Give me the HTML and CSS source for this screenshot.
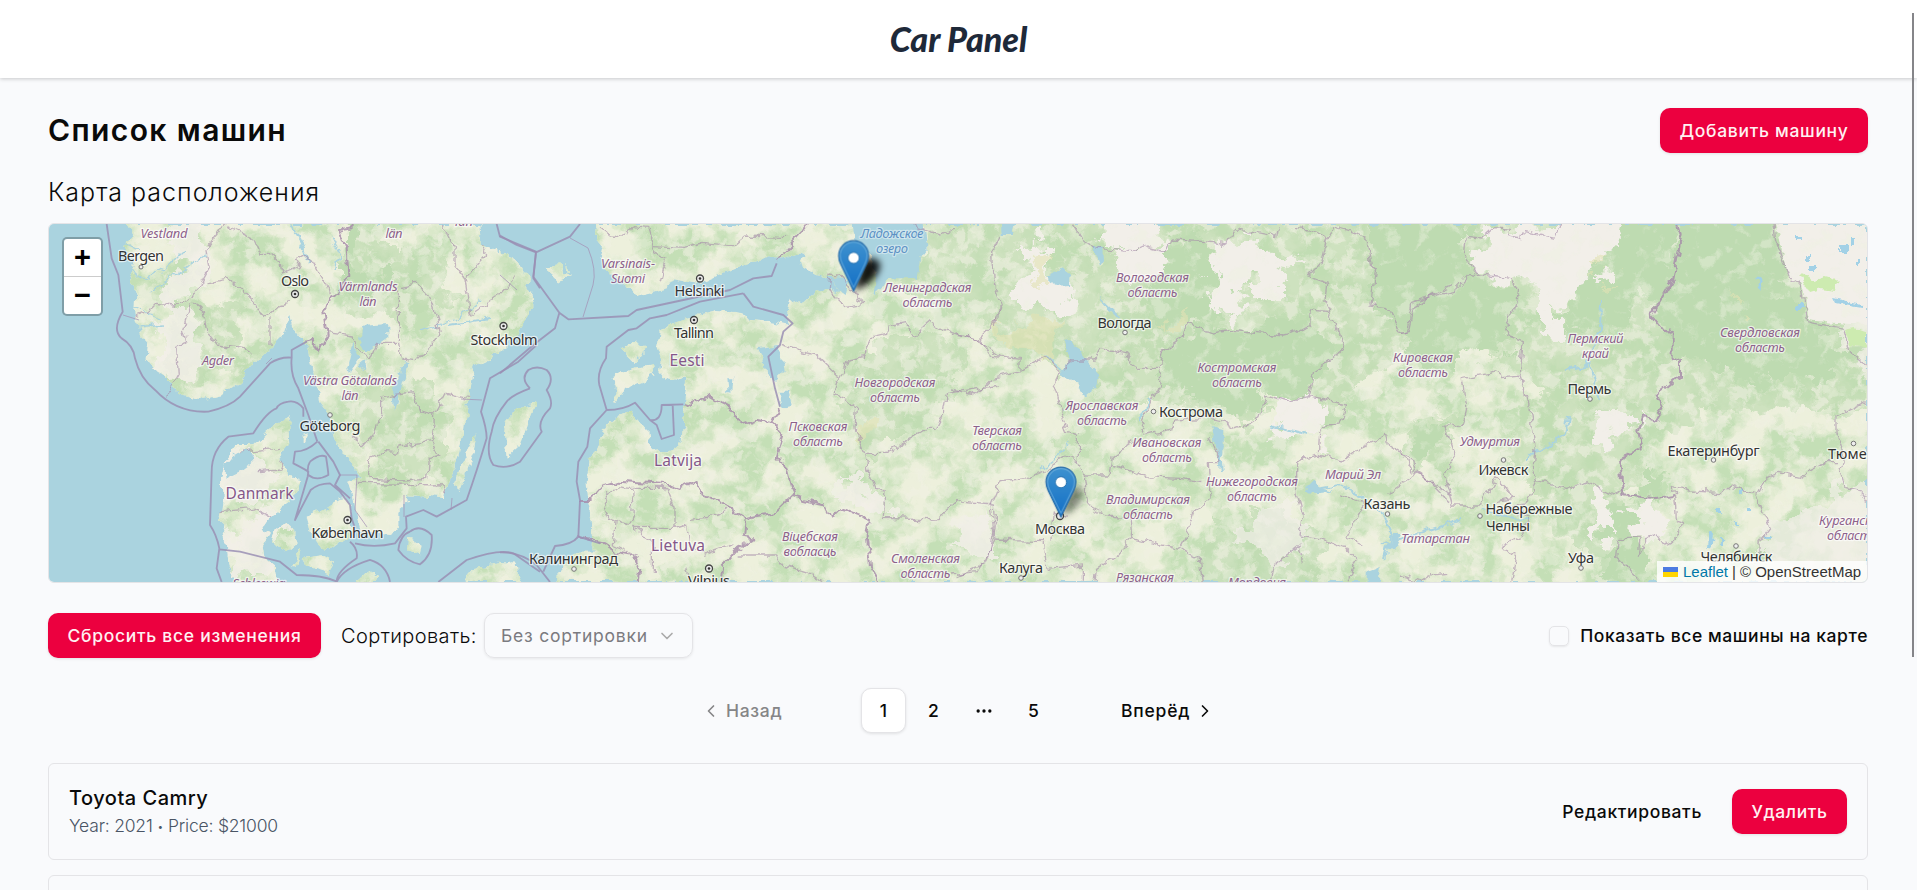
FILE: index.html
```html
<!DOCTYPE html>
<html lang="ru">
<head>
<meta charset="utf-8">
<title>Car Panel</title>
<link rel="stylesheet" href="styles.css">
</head>
<body>
<header class="header"><span class="logo">Car Panel</span></header>
<main class="main">
  <div class="title-row">
    <h1 class="title">Список машин</h1>
    <button class="btn btn-add">Добавить машину</button>
  </div>
  <h2 class="subtitle">Карта расположения</h2>
  <section class="map">
    <svg class="map-canvas" viewBox="49 224 1818 358" preserveAspectRatio="none">
      <defs>
        <filter id="rough" x="0" y="0" width="100%" height="100%" color-interpolation-filters="sRGB"><feTurbulence type="fractalNoise" baseFrequency=".09" numOctaves="3" seed="4"/><feDisplacementMap in="SourceGraphic" scale="10" xChannelSelector="R" yChannelSelector="G"/></filter>
        <filter id="ragged" filterUnits="userSpaceOnUse" x="49" y="224" width="1818" height="358" color-interpolation-filters="sRGB"><feTurbulence type="fractalNoise" baseFrequency=".035" numOctaves="5" seed="14"/><feDisplacementMap in="SourceGraphic" scale="55" xChannelSelector="R" yChannelSelector="G"/></filter>
        <filter id="forest" x="0" y="0" width="100%" height="100%" color-interpolation-filters="sRGB"><feTurbulence type="fractalNoise" baseFrequency=".03" numOctaves="5" seed="8"/><feColorMatrix values="0 0 0 0 .77  0 0 0 0 .875  0 0 0 0 .715  4 0 0 0 -1.5"/></filter>
        <filter id="clearing" x="0" y="0" width="100%" height="100%" color-interpolation-filters="sRGB"><feTurbulence type="fractalNoise" baseFrequency=".07" numOctaves="5" seed="21"/><feColorMatrix values="0 0 0 0 .945  0 0 0 0 .945  0 0 0 0 .89  0 6 0 0 -3"/></filter>
        <filter id="tracks" x="0" y="0" width="100%" height="100%" color-interpolation-filters="sRGB"><feTurbulence type="fractalNoise" baseFrequency=".06" numOctaves="5" seed="33"/><feColorMatrix values="0 0 0 0 .93  0 0 0 0 .945  0 0 0 0 .88  0 0 6 0 -3.3"/></filter>
        <filter id="soft" x="-50%" y="-50%" width="200%" height="200%"><feGaussianBlur stdDeviation="3.500"/></filter>
        <linearGradient id="pin-fill" x1="0" y1="0" x2="0" y2="1"><stop offset="0" stop-color="#3f92cf"/><stop offset="1" stop-color="#126fc6"/></linearGradient>
        <clipPath id="land">
          <path transform="translate(40 215) scale(.33333)" d="M245 0L280 60 255 95 285 140 265 180 290 230 285 290 300 360 325 385 320 430 345 465 400 505 420 535 490 552 545 540 600 500 640 450 685 400 735 350 750 300 765 345 800 390 810 440 830 500 840 560 870 600 885 670 920 730 960 790 925 800 940 850 950 900 960 945 1050 960 1075 930 1075 890 1110 860 1100 840 1215 850 1225 800 1250 740 1275 640 1285 550 1300 480 1290 460 1340 435 1380 410 1420 370 1470 300 1485 250 1430 160 1380 115 1325 90 1320 0Z
          M755 597L745 640 748 690 725 720 735 780 780 790 775 830 740 860 720 890 690 905 670 935 685 960 665 990 670 1030 705 1060 710 1130 590 1130 565 1040 560 980 543 930 550 860 543 790 560 730 590 690 640 690 680 650 720 620Z
          M700 940L740 925 765 950 770 985 740 1010 705 990 690 960ZM800 905L840 890 870 870 910 850 930 870 925 920 945 950 900 985 880 1000 835 990 815 960ZM785 1030L850 1020 885 1040 865 1075 800 1055ZM1108 972L1142 992 1136 1018 1104 1003ZM1310 655L1300 715 1255 832 1248 800 1285 700ZM1490 560L1430 580 1400 620 1395 655 1403 725 1440 690 1460 640ZM1240 1130L1300 1060 1410 1043 1430 1080 1460 1130ZM780 665L805 658 795 680ZM950 1095L985 1065 1015 1085 1000 1130ZM760 1060L775 1000 782 1000 770 1060Z"/>
          <path transform="translate(500 215) scale(.33333)" d="M290 0L285 70 310 100 300 140 330 180 370 210 420 240 500 220 520 190 600 205 680 170 780 130 850 130 895 115 920 120 900 150 950 180 990 190 1020 230 990 220 930 240 890 265 870 250 860 310 870 330 820 320 740 310 730 295 650 285 590 300 520 325 480 350 470 400 485 440 480 470 495 490 540 500 560 490 550 560 550 620 545 680 510 710 480 715 450 690 445 650 420 620 395 590 340 610 310 640 290 700 270 730 260 800 265 860 275 920 280 980 285 1010 230 1010 190 1050 150 1130H4200V0Z
          M335 490L400 460 460 450 465 480 400 510 370 530 350 560 345 520ZM360 400L410 375 435 400 430 420 400 440ZM140 155L175 148 188 170 215 180 180 190 170 205 155 180ZM195 150L210 165 200 172ZM0 110L40 130 90 190 60 250 0 320ZM0 1043L50 1050 60 1130H0Z"/>
        </clipPath>
      </defs>
      <rect x="49" y="224" width="1818" height="358" fill="#aad3df"/>
      <g filter="url(#rough)"><g clip-path="url(#land)">
        <rect x="49" y="224" width="1818" height="358" fill="#edf0dc"/>
        <rect x="49" y="224" width="1818" height="358" filter="url(#forest)"/>
        <g fill="#c0dcb3" opacity=".7" filter="url(#ragged)">
          <path d="M350 230L440 250 450 300 390 325 340 300ZM180 300L250 310 240 365 180 395 165 370ZM350 370L440 395 450 470 390 485 370 440ZM870 330L960 340 940 420 870 450 840 400ZM930 210H1890V400L1650 430 1420 330 1330 420 1100 400 1010 330 900 290ZM1240 425L1320 400 1310 360 1220 400ZM1620 300L1680 340 1640 480 1620 600 1500 450ZM1400 430L1460 410 1450 480 1400 440ZM1190 560L1250 500 1330 540 1320 600H1190Z"/>
        </g>
        <g fill="#f2efe9" opacity=".85" filter="url(#ragged)"><path d="M160 215L205 215 215 275 190 310 165 290 180 250ZM165 320L185 300 200 340 185 385 150 370ZM205 520L285 515 275 560 245 590 225 560ZM190 450L240 440 280 480 260 505 200 495ZM845 475L890 490 885 512 845 500ZM960 520L990 515 990 560 955 560Z"/></g>
        <rect x="49" y="224" width="1818" height="358" filter="url(#clearing)" opacity=".6"/>
        <g fill="#bedbb1" filter="url(#ragged)">
          <path d="M342 232L358 230 364 264 388 280 350 295 342 270ZM1160 345L1220 325 1320 320 1340 350 1310 400 1265 400 1230 425 1170 380ZM1370 210H1480L1460 245 1480 275 1515 285 1510 360 1420 365 1400 325 1370 300ZM1605 210L1670 210 1665 290 1600 335 1560 325 1580 285ZM1680 210L1775 210 1785 290 1820 325 1840 350 1830 380 1750 380 1675 360 1655 320ZM1415 430L1450 422 1440 452 1418 448ZM1640 465L1670 475 1665 500 1640 490ZM1620 500L1640 500 1638 560 1665 600H1625L1600 555ZM1165 240L1205 235 1215 320 1160 330 1150 290Z"/>
        </g>
        <g fill="#f2efe9" filter="url(#ragged)">
          <path d="M1015 238L1045 240 1050 275 1075 300 1060 315 1010 300 1030 270ZM1100 215H1150L1145 248 1105 242ZM1110 248L1165 245 1165 270 1125 280ZM1210 248L1235 238 1265 240 1295 265 1280 290 1240 290 1260 310 1210 318 1205 270ZM1270 400L1320 395 1315 445 1280 440ZM1485 228L1550 230 1560 255 1500 280 1480 268ZM1560 215H1615L1595 290 1560 305 1560 340 1535 330 1535 290 1515 270ZM1592 480L1620 500 1618 540 1588 540ZM1630 510L1660 505 1665 535 1635 540ZM1590 420L1635 420 1620 445 1595 440Z"/>
        </g>
        <g fill="#f2efe9" opacity=".7" filter="url(#ragged)"><path d="M1760 540L1840 480 1890 500V600H1760ZM1840 290L1850 350 1890 390V310ZM1250 510L1300 500 1295 560 1235 545Z"/></g>
        <path fill="#f2efe9" d="M1776 224H1867V325L1835 323 1808 320 1802 282 1788 275Z"/>
        <rect x="49" y="224" width="1818" height="358" filter="url(#tracks)" opacity=".45"/>
        <g fill="#e3e3b5" opacity=".6" filter="url(#ragged)"><path d="M990 320L1060 330 1040 355 1005 345ZM1035 250L1050 255 1042 290 1033 275ZM1160 325L1190 310 1188 322 1170 330ZM1597 285L1615 280 1612 292ZM1735 300L1752 305 1745 315ZM860 415L875 420 865 450 855 440ZM1597 252L1605 255 1602 268Z"/></g>
        <g fill="#cdebb0"><path d="M1800 275L1815 280 1825 277 1840 281 1835 290 1820 288 1810 291ZM1845 330L1855 328 1866 332V350L1850 345Z"/></g>
        <g fill="#aad3df">
          <path transform="translate(500 215) scale(.33333)" d="M1050 0L1060 60 1110 120 1130 180 1120 235 1150 215 1165 190 1250 190 1260 130 1285 95 1270 0ZM770 400L840 390 848 470 820 500 795 480 790 430ZM835 530L865 530 875 570 850 575ZM685 490L700 490 697 530 688 528ZM985 185L1050 190 1040 240 1000 225Z"/>
          <path transform="translate(950 215) scale(.33333)" d="M150 0L155 60 190 60 200 25ZM298 180L330 163 362 180 360 210 320 212 298 200ZM435 90L460 100 462 140 450 150ZM450 248L515 310 500 310 460 270ZM340 375L375 390 410 440 448 480 435 515 400 545 385 510 335 485 330 460 365 440ZM790 630L820 640 815 760 800 710ZM1250 1075L1290 1060 1285 1110H1250ZM1330 960L1355 960 1340 1000 1310 1010ZM1060 830L1090 800 1110 820 1150 830 1100 835Z"/>
          <path transform="translate(40 215) scale(.33333)" d="M970 335L1045 330 1045 365 1010 390 980 410 960 370ZM935 380L960 430 930 470 915 460ZM955 455L980 435 975 465ZM1105 445L1065 585 1058 550 1090 440ZM580 720L630 705 640 740 600 770 560 790 555 750Z"/>
        </g>
        <g fill="none" stroke="#aad3df" stroke-width="2">
          <path d="M291 224L305 250 310 262M450 325L490 318M1270 425L1310 435M1310 490L1340 485 1360 495 1383 515 1392 535 1385 560M1383 545L1460 520M1480 510L1530 520M1601 300L1600 330 1585 365M1565 370L1590 365 1595 382 1600 400M1525 462L1535 450 1550 445 1565 435 1568 415M1218 440L1222 470M1045 355L1060 368M1150 400L1140 420"/>
          <path stroke-width="1.300" d="M120 262L145 280 170 265 185 250M150 292L175 275 205 255M130 305L160 318M125 330L160 325M120 240L140 250M420 330L455 320 480 300M330 235L340 255 335 270M1070 440L1060 455 1040 470"/>
        </g>
        <g fill="#a2d1e6"><path d="M1842 245h5v8h-5zM1850 240h4v5h-4zM1838 248h3v6h-3zM1858 262h3v4h-3zM1806 254h5v6h-5zM1810 266h4v6h-4zM1797 238h4v3h-4zM1832 298l30 6v3l-28-5zM1708 530l5 2-1 14-5 4zM1716 510h5v4h-5zM1740 490h3v5h-3zM1748 508h4v4h-4zM1720 540h4v5h-4zM1735 520h3v4h-3zM1755 278l5 1 3 12-4-4zM1797 304h4v5h-4zM1765 535h4v3h-4z"/></g>
      </g>
      <g class="border thin">
        <path transform="translate(40 215) scale(.33333)" d="M555 27L495 110 505 160 455 250 410 270 350 265 325 290 290 305M565 35L640 70 660 115 690 115 720 140 725 180 780 155 765 130 800 120 855 200 865 235M500 200L560 190 600 220 640 260 670 310 715 270 745 260M455 270L430 340 440 380 410 400 415 480 380 545M460 270L490 290 500 350 530 390 610 400 640 420M690 310L690 390M1210 27L1245 100 1245 150 1275 190 1340 120 1325 90M1080 215L1130 205 1165 240 1190 315 1200 360 1130 440 1085 435 1075 380 1075 220M1275 190L1290 300 1380 240 1430 185M860 350L940 360 950 400 990 430 1010 385 1070 385M1025 545L1025 600 1005 650 970 690 930 665M1025 545L1120 530 1140 590 1185 600 1175 680 1075 690 1070 715 1040 710 985 735 990 790 1080 795 1160 790 1165 730 1200 720 1180 680M1180 600L1215 535 1285 550M950 805L1210 810 1220 835M545 890L640 880 690 905M650 770L720 765 730 740M610 710L720 700"/>
        <path transform="translate(500 215) scale(.33333)" d="M300 35L330 60 385 65 400 35 440 40 460 110 500 130 480 200M460 95L550 100 600 85 700 95 740 60 860 65M990 180L1030 185 1070 250 1090 265 1040 275 985 220ZM845 390L900 410 950 420 980 450 1020 485 1005 535 1070 570 1065 640 1095 715 1100 760 1125 820 1155 825 1150 910M1020 485L1040 435 1090 425 1120 365 1160 355 1165 330 1215 320 1240 365 1290 320 1350 350 1430 375 1500 420M1095 715L1160 715 1200 690 1280 640 1305 640 1330 590 1340 535 1500 510M1430 375L1500 310 1500 270M1150 910L1310 915 1370 860 1480 870 1485 940 1470 1010 1430 1070 1350 1080M310 860L345 815 395 820 400 900 390 930 330 910ZM400 820L500 820 525 880 525 940 400 940M345 920L340 990 410 1020M400 940L460 980 460 1070M525 940L560 930 570 990 610 1020 700 990M570 910L660 900 690 880M1230 27L1320 60 1360 35M560 1060L570 1101M710 1020L830 1020 850 1050 920 1070 970 1101"/>
        <path transform="translate(950 215) scale(.33333)" d="M150 60L125 110 130 210 155 275 135 335M370 27L400 80 450 100 540 110 580 90 650 110 665 75 770 80 830 90 860 40 980 65 985 40M1030 40L1080 45 1130 70 1150 35 1215 55 1250 70 1265 160 1280 165 1260 270 1310 275 1350 355 1375 350 1390 280 1450 240 1500 215M1130 70L1110 150 1075 185 1130 205 1125 260 1140 290 1080 285 1080 330 1045 350 1000 360 840 345 790 355 760 350 710 320 700 365 635 410 625 460 560 460 530 420 450 400 430 435 370 435 340 460M0 355L90 375 120 420 210 430 210 470 130 490 80 540 0 525M210 470L290 425 330 470 310 510 330 570 350 650 385 660 385 740 340 725 280 770 220 795 150 800 120 870 135 975 100 1050 20 1085M625 460L630 500 590 590 570 640 580 660 670 640 670 615 780 610 830 620 870 645 930 605 950 540 1010 560 1075 545 1090 470 1150 430 1185 400 1140 290M1075 545L1190 570 1170 630 1110 635 1105 720 1040 735 1040 830M1105 720L1170 740 1220 700 1310 660 1315 690 1390 740 1400 770 1500 840M385 740L400 780 480 780 490 720 550 680M490 745L590 785 690 790 760 800M780 660L810 740 775 740 780 850 730 890 710 960 690 1000 750 1030 760 1100M400 780L410 870 470 900 540 905 545 970 630 990 690 1000M545 970L500 1020 440 1060 435 1100M135 975L280 980 295 1060 400 1050 400 1100M300 980L310 890 350 910M1040 830L1060 900 1050 960 1110 970 1190 1000 1220 1030 1190 1100M1170 840L1250 870 1220 900 1190 970 1240 990M1310 840L1400 780M960 1100L970 1050 1050 990 1060 1040"/>
        <path transform="translate(1400 215) scale(.33333)" d="M0 355L20 350 35 265 110 240 160 230 210 175 240 180 330 190 350 220 345 270 315 330 330 365 370 380 360 480 310 485 290 470 190 490 200 580 190 625 135 640 165 730 135 780 160 870 240 870 290 790 320 820 340 850 290 860M240 180L190 120 195 70 240 75 285 35 325 40 325 65 365 75 370 50 465 70 485 27M360 480L390 580 405 700 400 760 415 790 380 870 310 880M415 800L500 820 560 800 640 840 665 830 M1125 27L1130 80 1165 180 1200 200 1220 320 1330 340 1350 410 1400 450M1400 560L1305 605 1305 660 1320 690 1330 740 1320 780 1335 815 1375 825 1400 860M1320 740L1280 740 1200 790 1130 775 1095 790 1070 840 990 815 970 830 870 825 820 815 825 850 830 920 860 930 810 980 790 990 770 960 740 980 715 1025M310 880L390 900 370 955 310 990 345 1030 335 1100M715 1025L720 970 655 970 650 1030 720 1095M1070 840L1110 940 1080 980 1080 1030M0 705L40 770 80 790 150 860M0 1080L60 1100 90 1080 150 1075"/>
      </g>
      <g class="border thick">
        <path transform="translate(40 215) scale(.33333)" d="M935 27L935 40 900 45 920 100 925 180 900 235 865 245 850 290 860 360 835 410 820 375 800 380"/>
        <path transform="translate(500 215) scale(.33333)" d="M550 570L625 545 690 580 700 605 740 630 775 615 820 625 850 660 830 730 860 760 880 840 830 890 740 910 690 880 600 830 595 800 540 825 500 810 350 800 310 815 275 855 240 855M740 910L735 965 760 970 710 1005 670 1050 665 1101M820 625L840 580M880 845L970 865 990 905 1030 885 1110 915 1100 960 1110 1060 1135 1101M230 970L310 985 350 1010 400 1020 415 1060 410 1101M925 27L830 140"/>
        <path transform="translate(1400 215) scale(.33333)" d="M835 27L845 60 820 190 755 300 790 345 815 355 815 430 840 440 840 480 770 540 790 580 765 620 730 605 715 650 725 700 660 730 670 840 760 850 820 840"/>
      </g></g>
      <g class="border sea">
        <path transform="translate(40 215) scale(.33333)" d="M200 27L215 130 235 180 248 290Q215 345 245 370 280 390 285 430 300 490 345 525 410 595 505 590 570 575 600 545L690 445Q720 425 755 428L755 405 800 380M755 428Q750 480 775 520L805 600 832 680 M832 680Q800 710 765 710L760 745Q790 760 805 770L803 785 765 915 812 825Q835 805 870 805L900 830 930 870 935 910 945 940M835 680L880 740 900 780 885 810 930 850M790 605L790 580Q770 555 745 560 715 565 710 580 680 590 640 655L565 665Q515 705 515 770L510 930Q530 960 538 1000L530 1060 545 1101M538 1003L600 1010 720 1040 770 1080Q850 1080 890 1100 890 1070 950 1030 955 1000 930 980M810 740Q840 715 858 725 865 770 865 780 830 800 805 780 800 755 810 740M945 985Q1000 1000 1065 985L1100 940 1098 905 1150 885 1190 905 1280 855Q1310 770 1340 670 1340 640 1323 590L1350 490 1435 440 1490 390M1370 27L1380 65 1488 110 1480 190 1500 220M1110 950Q1140 925 1175 960 1180 1020 1140 1048 1100 1040 1075 1005 1080 960 1110 950M890 1101Q910 1060 990 1035 1040 1050 1050 1101M1195 1101L1280 1035Q1380 1000 1420 1015L1500 1070"/>
        <path transform="translate(500 215) scale(.33333)" d="M0 62L50 90 108 112 100 185 178 293 205 313 385 303 410 285 690 225 760 190 815 183 830 145M108 112L210 65 240 27M178 293L165 340 100 390 0 475M730 235L760 275 850 300 878 325 850 350 840 390 805 425 825 520 840 575M730 235L600 260 500 300 450 310 410 340 385 345 320 395 318 430Q290 470 298 510L320 585 270 640 262 695 235 740 230 800 240 855 235 965Q215 990 165 993L130 1070M320 585Q370 585 405 563L450 615Q485 620 485 570L518 570 522 660 485 672 470 630 450 615M485 570L550 568M90 520Q60 490 85 465 110 450 140 465 165 490 140 525 160 560 150 580 110 620 125 650L60 740Q20 765 -20 750 -45 715 -25 650 -20 610 20 560 35 540 90 520M0 1012Q60 1010 110 1050L150 1101M235 965L300 985"/>
      </g>
      <g fill="none" stroke="#a48fb3" opacity=".7"><path d="M570 238L588 248Q597 270 593 285L583 317M123 315L139 320M266 364L272 358M339 475L357 475 355 510 367 527M451 510L452 498M404 517L404 495M461 399L482 400M500 275L517 290"/></g>

      <g class="place city">
        <text x="141" y="261" textLength="46">Bergen</text><text x="295" y="286" textLength="28">Oslo</text><text x="504" y="345" textLength="67">Stockholm</text><text x="330" y="431" textLength="61">Göteborg</text><text x="347.500" y="538" textLength="72">København</text>
        <text x="699.500" y="296" textLength="50">Helsinki</text><text x="694" y="338" textLength="40">Tallinn</text><text x="573.500" y="564" textLength="89">Калининград</text><text x="709" y="586" textLength="42">Vilnius</text>
        <text x="1124.500" y="328" textLength="54">Вологда</text><text x="1191" y="417" textLength="64">Кострома</text><text x="1060" y="534" textLength="50">Москва</text><text x="1021" y="573" textLength="44">Калуга</text><text x="1387" y="509" textLength="47">Казань</text>
        <text x="1589.500" y="394" textLength="44">Пермь</text><text x="1503.500" y="475" textLength="50">Ижевск</text><text x="1529" y="514" textLength="87">Набережные</text><text x="1508" y="531" textLength="44">Челны</text><text x="1581" y="563" textLength="26">Уфа</text><text x="1713.500" y="456" textLength="92">Екатеринбург</text><text x="1856" y="459" textLength="56">Тюмень</text><text x="1736.500" y="562" textLength="72">Челябинск</text>
      </g>
      <g class="place region">
        <text x="164" y="238" textLength="47">Vestland</text><text x="394" y="238" textLength="17">län</text><text x="464" y="226" textLength="18">län</text><text x="368" y="291" textLength="59">Värmlands</text><text x="368" y="306" textLength="17">län</text><text x="218" y="365" textLength="32">Agder</text><text x="350" y="385" textLength="94">Västra Götalands</text><text x="350" y="400" textLength="17">län</text><text x="259" y="588" textLength="53">Schleswig</text>
        <text x="628" y="268" textLength="54">Varsinais-</text><text x="628" y="283" textLength="34">Suomi</text><text x="927.500" y="292" textLength="88">Ленинградская</text><text x="927.500" y="307" textLength="50">область</text><text x="895" y="387" textLength="81">Новгородская</text><text x="895" y="402" textLength="50">область</text><text x="818" y="431" textLength="59">Псковская</text><text x="818" y="446" textLength="50">область</text><text x="810" y="541" textLength="56">Віцебская</text><text x="810" y="556" textLength="53">вобласць</text><text x="925.500" y="563" textLength="69">Смоленская</text><text x="925.500" y="578" textLength="50">область</text>
        <text x="1152.500" y="282" textLength="73">Вологодская</text><text x="1152.500" y="297" textLength="50">область</text><text x="1237" y="372" textLength="79">Костромская</text><text x="1237" y="387" textLength="50">область</text><text x="1102" y="410" textLength="73">Ярославская</text><text x="1102" y="425" textLength="50">область</text><text x="997" y="435" textLength="50">Тверская</text><text x="997" y="450" textLength="50">область</text><text x="1167" y="447" textLength="69">Ивановская</text><text x="1167" y="462" textLength="50">область</text><text x="1252" y="486" textLength="92">Нижегородская</text><text x="1252" y="501" textLength="50">область</text><text x="1148" y="504" textLength="84">Владимирская</text><text x="1148" y="519" textLength="50">область</text><text x="1353" y="479" textLength="56">Марий Эл</text><text x="1145" y="582" textLength="58">Рязанская</text><text x="1257" y="587" textLength="58">Мордовия</text>
        <text x="1423" y="362" textLength="60">Кировская</text><text x="1423" y="377" textLength="50">область</text><text x="1595.500" y="343" textLength="56">Пермский</text><text x="1595.500" y="358" textLength="27">край</text><text x="1760" y="337" textLength="80">Свердловская</text><text x="1760" y="352" textLength="50">область</text><text x="1490" y="446" textLength="60">Удмуртия</text><text x="1435.500" y="543" textLength="69">Татарстан</text><text x="1852" y="525" textLength="66">Курганская</text><text x="1852" y="540" textLength="50">область</text>
      </g>
      <g class="place lake"><text x="892" y="238" textLength="63">Ладожское</text><text x="892" y="253" textLength="32">озеро</text></g>
      <g class="place country"><text x="259.500" y="498.500" textLength="68">Danmark</text><text x="687" y="365.500" textLength="35">Eesti</text><text x="678" y="466" textLength="48">Latvija</text><text x="678" y="551" textLength="54">Lietuva</text></g>
      <g fill="#eee" stroke="#444"><g stroke-width="1.300"><circle cx="295" cy="294" r="3.500"/><circle cx="503.500" cy="326" r="3.500"/><circle cx="347.500" cy="520" r="3.500"/><circle cx="700" cy="278.500" r="3.500"/><circle cx="694" cy="320" r="3.500"/><circle cx="709" cy="568.500" r="3.500"/><circle cx="1060" cy="516" r="3.500"/></g>
      <g stroke="#777"><circle cx="141" cy="267" r="2"/><circle cx="330" cy="415" r="2.300"/><circle cx="574" cy="569" r="2.300"/><circle cx="1125" cy="332.500" r="2.300"/><circle cx="1153.500" cy="411.500" r="2.300"/><circle cx="1387.500" cy="514" r="2.300"/><circle cx="1021" cy="578" r="2.300"/><circle cx="1590" cy="399" r="2.300"/><circle cx="1503.500" cy="460" r="2.300"/><circle cx="1480" cy="516" r="2.300"/><circle cx="1581" cy="568" r="2.300"/><circle cx="1713.500" cy="460" r="2.300"/><circle cx="1853.500" cy="443.500" r="2.300"/><circle cx="1736" cy="546" r="2.300"/></g></g>
      <g fill="#333"><circle cx="295" cy="294" r="1.300"/><circle cx="503.500" cy="326" r="1.300"/><circle cx="347.500" cy="520" r="1.300"/><circle cx="700" cy="278.500" r="1.300"/><circle cx="694" cy="320" r="1.300"/><circle cx="709" cy="568.500" r="1.300"/></g>

      <g filter="url(#soft)"><path d="M854 291L862 262Q872 254 880 263 881 274 868 284Z" fill="#000" opacity=".9"/><path d="M1061 516L1068 492Q1076 482 1083 490 1084 501 1072 511Z" fill="#000" opacity=".42"/></g>
      <g transform="translate(838 240) scale(1.25)"><path d="M12.500.5C5.800.5.500 5.900.500 12.500c0 2.600.700 4.900 1.700 7L12.500 41l10.300-21.500c1-2.100 1.700-4.400 1.700-7C24.500 5.900 19.200.5 12.500.5z" fill="url(#pin-fill)" stroke="#2b6ea8" stroke-width=".9"/><path d="M12.500 1.800C6.600 1.800 1.800 6.600 1.800 12.500c0 2.300.6 4.400 1.600 6.400l9.100 19 9.100-19c1-2 1.600-4.100 1.600-6.400 0-5.900-4.800-10.700-10.700-10.700z" fill="none" stroke="#74b3df" stroke-opacity=".65" stroke-width=".9"/><circle cx="12.500" cy="14.300" r="4.500" fill="#fff" stroke="#2772b0" stroke-width=".8"/></g>
      <g transform="translate(1045.300 466.500) scale(1.250 1.230)"><path d="M12.500.5C5.800.5.500 5.900.500 12.500c0 2.600.700 4.900 1.700 7L12.500 41l10.300-21.500c1-2.100 1.700-4.400 1.700-7C24.500 5.900 19.200.5 12.500.5z" fill="url(#pin-fill)" stroke="#2b6ea8" stroke-width=".9"/><path d="M12.500 1.800C6.600 1.800 1.800 6.600 1.800 12.500c0 2.300.6 4.400 1.600 6.400l9.100 19 9.100-19c1-2 1.600-4.100 1.600-6.400 0-5.900-4.800-10.700-10.700-10.700z" fill="none" stroke="#74b3df" stroke-opacity=".65" stroke-width=".9"/><circle cx="12.500" cy="12.800" r="4.500" fill="#fff" stroke="#2772b0" stroke-width=".8"/></g>
    </svg>
    <div class="zoom"><span class="zoom-btn">+</span><span class="zoom-btn">−</span></div>
    <div class="attribution"><i class="flag"></i><a class="leaflet">Leaflet</a><span>|</span><span>© OpenStreetMap</span></div>
  </section>
  <div class="tools">
    <button class="btn btn-reset">Сбросить все изменения</button>
    <span class="sort-label">Сортировать:</span>
    <div class="select"><span>Без сортировки</span><svg class="icon" viewBox="0 0 24 24"><path d="m6 9 6 6 6-6"/></svg></div>
    <label class="show-all"><i class="checkbox"></i><span>Показать все машины на карте</span></label>
  </div>
  <nav class="pages">
    <span class="prev"><svg class="icon" viewBox="0 0 24 24"><path d="m15 18-6-6 6-6"/></svg><span>Назад</span></span>
    <span class="page current">1</span><span class="page">2</span>
    <span class="page"><svg class="icon dots" viewBox="0 0 24 24"><circle cx="5" cy="12" r="1"/><circle cx="12" cy="12" r="1"/><circle cx="19" cy="12" r="1"/></svg></span>
    <span class="page">5</span>
    <span class="next"><span>Вперёд</span><svg class="icon" viewBox="0 0 24 24"><path d="m9 18 6-6-6-6"/></svg></span>
  </nav>
  <article class="card">
    <div><div class="car-name">Toyota Camry</div><div class="car-meta">Year: 2021 <span class="bullet">•</span> Price: $21000</div></div>
    <div class="actions"><span class="edit">Редактировать</span><button class="btn btn-delete">Удалить</button></div>
  </article>
  <article class="card"></article>
</main>
<div class="scroll-thumb"></div>
</body>
</html>
```
FILE: styles.css
```css
* { box-sizing: border-box; }
body { margin: 0; height: 890px; overflow: hidden; background: #f9fafc; color: #0a0a0a; font-family: Inter, "Noto Sans", sans-serif; font-size: 20px; }
.header { height: 78px; display: flex; align-items: center; justify-content: center; background: #fff; box-shadow: 0 1px 4px rgba(0,0,0,.2); position: relative; }
.logo { font: italic 900 34px/1 Lato, sans-serif; color: #1e2939; letter-spacing: 0; }
.main { width: 1820px; margin-left: 48px; padding-top: 30px; }
.title-row { display: flex; align-items: center; justify-content: space-between; height: 45px; }
.title { margin: 0; font-size: 30px; font-weight: 600; line-height: 45px; letter-spacing: 1.4px; white-space: nowrap; }
.subtitle { margin: 20px 0 12px; font-size: 25px; line-height: 38px; font-weight: 350; letter-spacing: 1px; white-space: nowrap; }
.btn { height: 45px; padding: 0; border: 0; border-radius: 10px; background: #ec003f; color: #fff1f2; font-family: inherit; font-size: 17.5px; font-weight: 500; white-space: nowrap; box-shadow: 0 1px 3px rgba(0,0,0,.1); }
.btn-add { width: 208px; letter-spacing: .7px; }
.btn-reset { width: 273px; letter-spacing: .7px; }
.btn-delete { width: 115px; letter-spacing: .6px; }
.map { position: relative; height: 360px; border: 1px solid #e4e4e7; border-radius: 6px; overflow: hidden; }
.map-canvas { display: block; width: 1818px; height: 358px; }
.place { font-family: "Noto Sans", sans-serif; text-anchor: middle; paint-order: stroke; stroke: #fff; stroke-opacity: .65; stroke-width: 2.5px; stroke-linejoin: round; }
.city { font-size: 14.5px; fill: #333; }
.region { font-size: 13px; font-style: italic; fill: #8d618b; }
.lake { font-size: 13px; font-style: italic; fill: #5d91c4; stroke-opacity: .4; }
.country { font-size: 15.5px; fill: #85588a; }
.border { fill: none; stroke: #a58aa9; stroke-linejoin: round; }
.thin path { stroke-width: 4px; opacity: .6; }
.thick path { stroke-width: 6px; opacity: .8; }
.sea path { stroke: #9a8fb4; stroke-width: 5.5px; opacity: .85; }
.zoom { position: absolute; left: 13px; top: 13px; width: 41px; height: 79px; border: 2px solid rgba(0,0,0,.25); border-radius: 5px; background: #fff; background-clip: padding-box; display: flex; flex-direction: column; }
.zoom-btn { flex: 1; display: flex; align-items: center; justify-content: center; font: bold 29px/1 "Liberation Sans", sans-serif; color: #000; }
.zoom-btn:first-child { border-bottom: 1px solid #ccc; }
.attribution { position: absolute; right: 0; bottom: 0; width: 210px; height: 21px; padding-left: 6px; display: flex; align-items: center; background: rgba(255,255,255,.8); font: 15px/21px "Liberation Sans", sans-serif; color: #333; gap: 4px; white-space: nowrap; }
.flag { width: 15px; height: 10px; margin-right: 1px; background: linear-gradient(#4c7be1 50%, #ffd500 50%); }
.leaflet { color: #0078a8; }
.tools { display: flex; align-items: center; height: 45px; margin-top: 30px; white-space: nowrap; }
.sort-label { width: 138px; margin: 0 5px 0 20px; letter-spacing: .4px; font-weight: 350; }
.select { width: 209px; height: 45px; padding: 0 15px 0 16px; display: flex; align-items: center; justify-content: space-between; border: 1px solid #e4e4e7; border-radius: 10px; box-shadow: 0 1px 3px rgba(0,0,0,.08); font-size: 17.5px; color: #7b7b80; letter-spacing: .78px; }
.icon { width: 20px; height: 20px; fill: none; stroke: currentColor; stroke-width: 2; stroke-linecap: round; stroke-linejoin: round; flex: none; }
.select .icon { stroke: #aaa; }
.show-all { margin-left: auto; display: flex; align-items: center; gap: 11px; font-size: 17.5px; font-weight: 500; letter-spacing: .58px; }
.checkbox { width: 20px; height: 20px; border: 1px solid #e4e4e7; border-radius: 5px; box-shadow: 0 1px 2px rgba(0,0,0,.08); }
.pages { height: 45px; margin: 30px 0; padding-left: 653px; display: flex; align-items: center; gap: 5px; font-size: 17.5px; font-weight: 500; }
.prev, .next { display: flex; align-items: center; letter-spacing: .7px; }
.prev { width: 155px; gap: 5px; color: #858587; font-weight: 450; }
.next { margin-left: 60px; gap: 5px; letter-spacing: .8px; }
.page { width: 45px; height: 45px; display: flex; align-items: center; justify-content: center; }
.current { border: 1px solid #e4e4e7; border-radius: 10px; background: #fff; box-shadow: 0 1px 3px rgba(0,0,0,.1); }
.card { height: 97px; margin-bottom: 15px; padding: 0 20px; display: flex; align-items: center; justify-content: space-between; border: 1px solid #e4e4e7; border-radius: 6px; }
.car-name { font-size: 20px; line-height: 30px; font-weight: 500; letter-spacing: .5px; }
.car-meta { font-size: 17.5px; line-height: 25px; color: #4a5565; letter-spacing: -.2px; font-weight: 350; }
.bullet { font-size: 11px; vertical-align: 1px; }
.actions { display: flex; align-items: center; gap: 30px; }
.edit { font-size: 17.5px; font-weight: 500; letter-spacing: .65px; }
.scroll-thumb { position: absolute; left: 1912px; top: 13px; width: 2px; height: 644px; background: #858589; }
```
